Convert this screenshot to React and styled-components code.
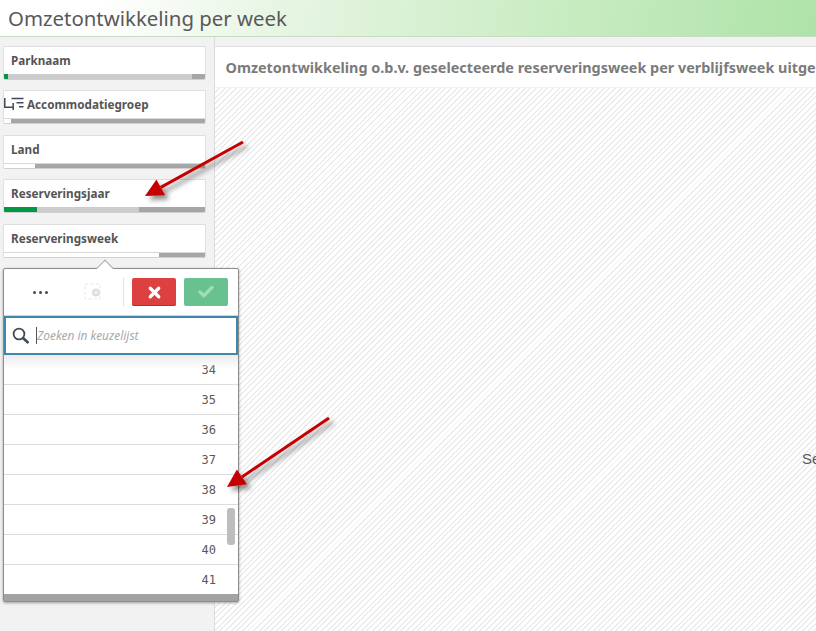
import React from "react";
import styled, { createGlobalStyle } from "styled-components";
import { X, Check } from "lucide-react";

const GlobalStyle = createGlobalStyle`
  html, body {
    margin: 0;
    padding: 0;
    height: 100%;
    overflow: hidden;
    background: #f2f2f2;
    font-family: "Noto Sans", "Open Sans", sans-serif;
  }
  * { box-sizing: border-box; }
`;

const Page = styled.div`
  position: relative;
  width: 816px;
  height: 631px;
  overflow: hidden;
  background: #f2f2f2;
`;

const TopBar = styled.header`
  height: 37px;
  padding-left: 8px;
  display: flex;
  align-items: center;
  background: linear-gradient(100deg, #ffffff 0%, #ffffff 12%, #e6f5e2 35%, #c9ecc2 68%, #aee3a8 100%);
  border-bottom: 1px solid #c8dcc5;
  color: #595959;
  font-size: 20.4px;
  line-height: 30px;
`;

const Content = styled.div`
  display: flex;
  height: 594px;
`;

const Sidebar = styled.aside`
  width: 215px;
  flex: none;
  padding: 9px 0 0 3px;
  display: flex;
  flex-direction: column;
  gap: 10.4px;
  border-right: 1px solid #dcdcdc;
`;

const FilterCard = styled.div`
  width: 203px;
  height: 34px;
  background: #fff;
  border: 1px solid #dedede;
  border-bottom-color: #d0d0d0;
  border-radius: 2px;
  display: flex;
  flex-direction: column;
  overflow: hidden;
`;

const FilterLabel = styled.div`
  flex: 1;
  display: flex;
  align-items: center;
  gap: 3px;
  padding: 0 0 1px ${(p) => (p.$icon ? "0" : "7px")};
  color: #555555;
  font-size: 11.7px;
  font-weight: 700;
  white-space: nowrap;
`;

const StateBar = styled.div`
  height: 5px;
  flex: none;
  display: flex;
  border-top: ${(p) => (p.$lined ? "1px solid #d8d8d8" : "none")};
`;

const Segment = styled.div`
  background: ${(p) => p.$color};
  flex: ${(p) => (p.$size ? `0 0 ${p.$size}px` : "1")};
`;

const Main = styled.main`
  flex: 1;
  min-width: 0;
  margin-top: 9px;
  display: flex;
  flex-direction: column;
  background: #fff;
  border-top: 1px solid #e0e0e0;
  overflow: hidden;
`;

const MainTitle = styled.h1`
  margin: 0;
  height: 41px;
  flex: none;
  padding: 0 0 0 10.5px;
  display: flex;
  align-items: center;
  color: #7b7b7b;
  font-size: 14.4px;
  font-weight: 700;
  white-space: nowrap;
  border-bottom: 1px solid #f0f0f0;
`;

const Hatched = styled.div`
  flex: 1;
  padding: 362px 0 0 587px;
  color: #595959;
  font-family: "Liberation Sans", sans-serif;
  font-size: 15px;
  white-space: nowrap;
  background: repeating-linear-gradient(135deg, #ffffff 0 2.6px, #ececec 2.6px 4px);
`;

const Popover = styled.div`
  position: absolute;
  left: 3px;
  top: 268px;
  width: 236px;
  height: 334px;
  background: #fff;
  border: 1px solid #8c8c8c;
  border-radius: 2px;
  box-shadow: 0 1px 3px rgba(0, 0, 0, 0.35);
  display: flex;
  flex-direction: column;
`;

const Caret = styled.div`
  position: absolute;
  left: 95px;
  top: -7px;
  width: 12px;
  height: 12px;
  background: #fff;
  border-left: 1px solid #a8a8a8;
  border-top: 1px solid #a8a8a8;
  transform: rotate(45deg);
`;

const Toolbar = styled.div`
  height: 47px;
  flex: none;
  display: flex;
  align-items: center;
  border-bottom: 1px solid #d4d4d4;
  position: relative;
`;

const MoreDots = styled.div`
  margin-left: 29px;
  display: flex;
  gap: 3px;
  & > span {
    width: 3px;
    height: 3px;
    border-radius: 50%;
    background: #404a5c;
  }
`;

const ClearIcon = styled.svg`
  margin-left: 36px;
  width: 18px;
  height: 18px;
`;

const Divider = styled.div`
  width: 1px;
  height: 28px;
  margin-left: 21px;
  background: #e2e2e2;
`;

const ActionButton = styled.button`
  width: 44px;
  height: 28px;
  margin-left: ${(p) => p.$gap}px;
  padding: 0;
  display: flex;
  align-items: center;
  justify-content: center;
  border: none;
  border-radius: 2px;
  background: ${(p) => p.$color};
  box-shadow: ${(p) => (p.$edge ? `inset 0 -1px 0 ${p.$edge}` : "none")};
  color: ${(p) => p.$ink};
`;

const SearchBox = styled.div`
  height: 39px;
  flex: none;
  display: flex;
  align-items: center;
  border: 2px solid #3f86ad;
  background: #fff;
  color: #595959;
`;

const SearchGlyph = styled.svg`
  width: 18px;
  height: 18px;
  margin-left: 6px;
  flex: none;
`;

const CaretLine = styled.div`
  width: 1px;
  height: 17px;
  margin-left: 6px;
  background: #555;
`;

const Placeholder = styled.div`
  color: #a9a9a9;
  font-size: 11.9px;
  font-style: italic;
  padding-bottom: 2px;
`;

const List = styled.div`
  position: relative;
  flex: 1;
  min-height: 0;
  overflow: hidden;
  &::before {
    content: "";
    position: absolute;
    left: 0;
    right: 0;
    top: 0;
    height: 14px;
    background: linear-gradient(#ececec, #ffffff00);
  }
`;

const Row = styled.div`
  height: 30px;
  padding: 0 22px 0 0;
  display: flex;
  align-items: center;
  justify-content: flex-end;
  border-bottom: 1px solid #dcdcdc;
  color: #595959;
  font-family: "DejaVu Sans Mono", monospace;
  font-size: 12px;
`;

const Thumb = styled.div`
  position: absolute;
  right: 3px;
  top: 153px;
  width: 8px;
  height: 37px;
  border-radius: 3px;
  background: #bdbdbd;
`;

const BottomBar = styled.div`
  height: 7px;
  flex: none;
  background: #a3a3a3;
`;

const Annotation = styled.svg`
  position: absolute;
  left: 0;
  top: 0;
  width: 816px;
  height: 631px;
  pointer-events: none;
`;

const filters = [
  { name: "Parknaam", bar: [["#009845", 3.5], ["#cccccc"], ["#a6a6a6", 13]] },
  { name: "Accommodatiegroep", icon: true, bar: [["#ffffff", 7], ["#a6a6a6"]] },
  { name: "Land", bar: [["#ffffff", 31], ["#a6a6a6"]] },
  { name: "Reserveringsjaar", bar: [["#009845", 33], ["#cccccc"], ["#a6a6a6", 66]] },
  { name: "Reserveringsweek", bar: [["#ffffff", 155], ["#a6a6a6"]] },
];

const weeks = [34, 35, 36, 37, 38, 39, 40, 41];

function DrillIcon() {
  return (
    <svg width="20" height="14" viewBox="0 0 20 14" fill="none" stroke="#404a5c" strokeWidth="1.5">
      <path d="M0.8 1v9.3h9M7.5 1.6h12M12.5 5.7h7M15 9.7h4.5M9.2 6v7M6.5 10.3l-1.5 0" />
    </svg>
  );
}

function Arrow({ x1, y1, x2, y2, id }) {
  const angle = Math.atan2(y2 - y1, x2 - x1);
  const ux = Math.cos(angle);
  const uy = Math.sin(angle);
  const bx = x2 - ux * 18;
  const by = y2 - uy * 18;
  const head = `${x2},${y2} ${bx - uy * 9},${by + ux * 9} ${bx + uy * 9},${by - ux * 9}`;
  return (
    <g filter={`url(#${id})`}>
      <line x1={x1} y1={y1} x2={bx} y2={by} stroke="#c60000" strokeWidth="3" />
      <polygon points={head} fill="#c60000" />
    </g>
  );
}

export default function App() {
  return (
    <Page>
      <GlobalStyle />
      <TopBar>Omzetontwikkeling per week</TopBar>
      <Content>
        <Sidebar>
          {filters.map((f) => (
            <FilterCard key={f.name}>
              <FilterLabel $icon={f.icon}>
                {f.icon && <DrillIcon />}
                {f.name}
              </FilterLabel>
              <StateBar $lined={f.bar[0][0] === "#ffffff"}>
                {f.bar.map(([color, size], i) => (
                  <Segment key={i} $color={color} $size={size} />
                ))}
              </StateBar>
            </FilterCard>
          ))}
        </Sidebar>
        <Main>
          <MainTitle>Omzetontwikkeling o.b.v. geselecteerde reserveringsweek per verblijfsweek uitge</MainTitle>
          <Hatched>Se</Hatched>
        </Main>
      </Content>
      <Popover>
        <Caret />
        <Toolbar>
          <MoreDots>
            <span />
            <span />
            <span />
          </MoreDots>
          <ClearIcon viewBox="0 0 18 18" fill="none">
            <rect x="1" y="1" width="15" height="15" stroke="#e6e6e6" strokeDasharray="3 2.5" />
            <circle cx="12" cy="9.5" r="4" fill="#dedede" />
            <path d="M10.5 8l3 3M13.5 8l-3 3" stroke="#fff" />
          </ClearIcon>
          <Divider />
          <ActionButton $gap={8} $color="#dc4040" $edge="#b52f2f" $ink="#fff">
            <X size={17} strokeWidth={4.6} />
          </ActionButton>
          <ActionButton $gap={8} $color="#68c28f" $ink="#9fdcb9">
            <Check size={18} strokeWidth={4.4} />
          </ActionButton>
        </Toolbar>
        <SearchBox>
          <SearchGlyph viewBox="0 0 18 18" fill="none" stroke="#3f4a5a">
            <circle cx="7" cy="7" r="5.4" strokeWidth="1.8" />
            <path d="M11 11l5.5 5" strokeWidth="2.6" />
          </SearchGlyph>
          <CaretLine />
          <Placeholder>Zoeken in keuzelijst</Placeholder>
        </SearchBox>
        <List>
          {weeks.map((w) => (
            <Row key={w}>{w}</Row>
          ))}
          <Thumb />
        </List>
        <BottomBar />
      </Popover>
      <Annotation viewBox="0 0 816 631">
        <defs>
          <filter id="drop" x="-20%" y="-20%" width="150%" height="150%">
            <feDropShadow dx="4" dy="4" stdDeviation="2.5" floodColor="#000" floodOpacity="0.45" />
          </filter>
        </defs>
        <Arrow id="drop" x1={243} y1={142} x2={145} y2={196} />
        <Arrow id="drop" x1={329} y1={418} x2={227} y2={487} />
      </Annotation>
    </Page>
  );
}
